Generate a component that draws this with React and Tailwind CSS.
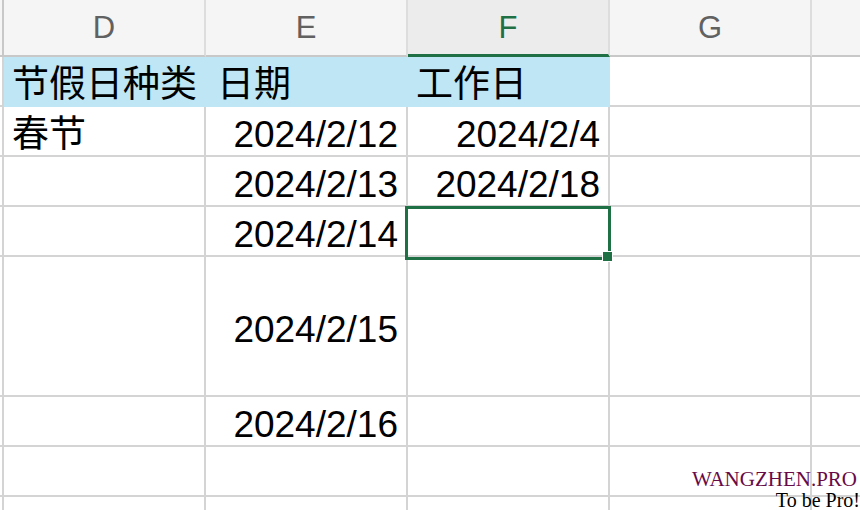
import React from 'react';

const cols = ['D', 'E', 'F', 'G'];

const rows = [
  { h: 'h-[50px]', cells: [
    { t: '节假日种类', fill: true },
    { t: '日期', fill: true, pad: 'pl-[11px]' },
    { t: '工作日', fill: true },
    { t: '' },
  ] },
  { h: 'h-[50px]', cells: [{ t: '春节' }, { t: '2024/2/12', right: true }, { t: '2024/2/4', right: true }, { t: '' }] },
  { h: 'h-[50px]', cells: [{ t: '' }, { t: '2024/2/13', right: true }, { t: '2024/2/18', right: true }, { t: '' }] },
  { h: 'h-[50px]', cells: [{ t: '' }, { t: '2024/2/14', right: true }, { t: '', selected: true }, { t: '' }] },
  { h: 'h-[140px]', cells: [{ t: '' }, { t: '2024/2/15', right: true }, { t: '' }, { t: '' }] },
  { h: 'h-[50px]', cells: [{ t: '' }, { t: '2024/2/16', right: true }, { t: '' }, { t: '' }] },
  { h: 'h-[50px]', cells: [{ t: '' }, { t: '' }, { t: '' }, { t: '' }] },
  { h: 'h-[50px]', cells: [{ t: '' }, { t: '' }, { t: '' }, { t: '' }] },
];

function Cell({ cell }) {
  const base = 'relative w-[202px] shrink-0 flex items-center pt-[7px] border-r-2 border-b-2 text-[37px] leading-none text-black whitespace-nowrap';
  const fill = cell.fill ? 'bg-[#bee6f4] border-[#bee6f4]' : 'bg-white border-[#d4d4d4]';
  const align = cell.right ? 'justify-end pr-[8px]' : (cell.pad || 'pl-[8px]');
  return (
    <div className={`${base} ${fill} ${align} ${cell.selected ? 'z-10' : ''}`}>
      {cell.t}
      {cell.selected && (
        <div className="absolute -left-[3px] -top-[1px] w-[206px] h-[54px] border-[3px] border-solid border-[#1f7145] pointer-events-none">
          <div className="absolute -right-[5px] -bottom-[5px] w-[11px] h-[11px] bg-[#1f7145] border border-white" />
        </div>
      )}
    </div>
  );
}

export default function App() {
  return (
    <div
      className="relative w-[860px] h-[510px] overflow-hidden bg-white"
      style={{ fontFamily: '"Liberation Sans", "Noto Sans CJK SC", sans-serif' }}
    >
      {/* column header */}
      <div className="flex h-[57px]">
        <div className="w-[4px] shrink-0 bg-[#f5f5f5] border-r-2 border-b-2 border-[#c8c8c8]" />
        {cols.map((c) => (
          <div
            key={c}
            className={`w-[202px] shrink-0 flex items-center justify-center pt-[2px] text-[31px] border-r-2 border-r-[#dddddd] ${
              c === 'F'
                ? 'bg-[#ececec] text-[#1f7145] border-b-[3px] border-b-[#1f7145]'
                : 'bg-[#f5f5f5] text-[#616161] border-b-2 border-b-[#c8c8c8]'
            }`}
          >
            {c}
          </div>
        ))}
        <div className="flex-1 bg-[#f5f5f5] border-b-2 border-[#c8c8c8]" />
      </div>

      {rows.map((r, i) => (
        <div key={i} className={`flex ${r.h}`}>
          <div className="w-[4px] shrink-0 bg-white border-r-2 border-b-2 border-[#d4d4d4]" />
          {r.cells.map((c, j) => (
            <Cell key={j} cell={c} />
          ))}
          <div className="flex-1 bg-white border-b-2 border-[#d4d4d4]" />
        </div>
      ))}

      {/* watermark */}
      <div
        className="absolute right-0 bottom-0 z-20 flex flex-col items-end leading-none"
        style={{ fontFamily: '"Liberation Serif", serif' }}
      >
        <div className="text-[21px] text-[#680a47] mr-[3px]">WANGZHEN.PRO</div>
        <div className="text-[20px] text-black">To be Pro!</div>
      </div>
    </div>
  );
}
